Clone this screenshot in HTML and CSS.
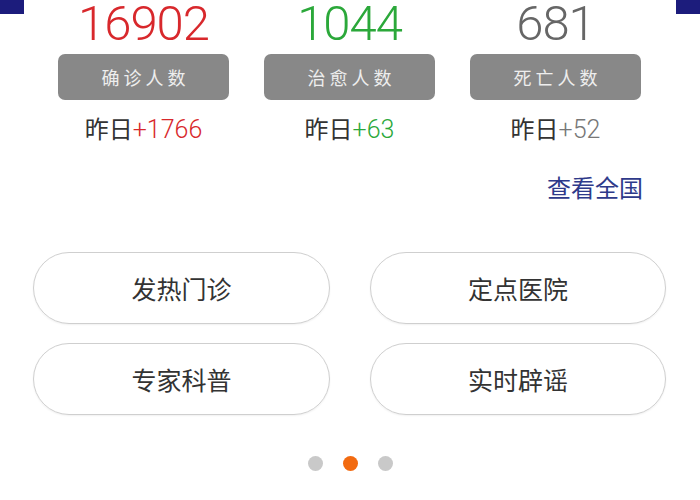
FILE: index.html
```html
<!DOCTYPE html>
<html lang="zh">
<head>
<meta charset="utf-8">
<title>疫情数据</title>
<link rel="stylesheet" href="styles.css">
</head>
<body>
<div class="page">
  <div class="corner corner-left"></div>
  <div class="corner corner-right"></div>

  <section class="stats">
    <div class="stat">
      <div class="num red">16902</div>
      <div class="label">确诊人数</div>
      <div class="delta">昨日<span class="inc red">+1766</span></div>
    </div>
    <div class="stat">
      <div class="num green">1044</div>
      <div class="label">治愈人数</div>
      <div class="delta">昨日<span class="inc green">+63</span></div>
    </div>
    <div class="stat">
      <div class="num gray">681</div>
      <div class="label">死亡人数</div>
      <div class="delta">昨日<span class="inc gray2">+52</span></div>
    </div>
  </section>

  <div class="more"><a class="more-link">查看全国</a></div>

  <section class="links">
    <div class="pill">发热门诊</div>
    <div class="pill">定点医院</div>
    <div class="pill">专家科普</div>
    <div class="pill">实时辟谣</div>
  </section>

  <div class="dots">
    <span class="dot"></span>
    <span class="dot active"></span>
    <span class="dot"></span>
  </div>
</div>
</body>
</html>
```

FILE: styles.css
```css
html, body {
  margin: 0;
  padding: 0;
  background: #fff;
}

body {
  font-family: "Liberation Sans", "Noto Sans CJK SC", sans-serif;
  color: #333;
}

.page {
  position: relative;
  width: 700px;
  height: 500px;
  overflow: hidden;
}

.corner {
  position: absolute;
  top: 0;
  width: 24px;
  height: 14px;
  background: #1c1c7c;
}

.corner-left { left: 0; }
.corner-right { right: 0; }

.stats {
  display: grid;
  grid-template-columns: repeat(3, 171px);
  column-gap: 35px;
  padding: 0 0 0 58px;
}

.stat {
  display: flex;
  flex-direction: column;
  align-items: center;
}

.num {
  font-family: Roboto, "Liberation Sans", sans-serif;
  font-weight: 300;
  font-size: 49px;
  line-height: 48px;
  height: 48px;
  letter-spacing: -1px;
}

.red { color: #d8282c; }
.green { color: #2ba83a; }
.gray { color: #666; }
.gray2 { color: #777; }

.label {
  margin-top: 6px;
  width: 171px;
  height: 46px;
  border-radius: 7px;
  background: #888;
  color: #eee;
  font-size: 18px;
  letter-spacing: 4px;
  text-indent: 4px;
  display: flex;
  align-items: center;
  justify-content: center;
}

.delta {
  margin-top: 15px;
  font-size: 24px;
  line-height: 30px;
  color: #333;
}

.inc {
  font-family: Roboto, "Liberation Sans", sans-serif;
  font-weight: 300;
  font-size: 25px;
}

.more {
  display: flex;
  justify-content: flex-end;
  padding: 0 57px;
  margin-top: 29px;
}

.more-link {
  font-size: 24px;
  line-height: 30px;
  color: #2e3a8a;
}

.links {
  display: grid;
  grid-template-columns: 297px 296px;
  column-gap: 40px;
  row-gap: 19px;
  padding: 0 0 0 33px;
  margin-top: 48px;
}

.pill {
  height: 70px;
  border: 1px solid #cfcfcf;
  border-radius: 36px;
  display: flex;
  align-items: center;
  justify-content: center;
  font-size: 25px;
  color: #333;
  box-shadow: 0 1px 2px rgba(0, 0, 0, 0.06);
}

.dots {
  display: flex;
  justify-content: center;
  gap: 20px;
  margin-top: 41px;
}

.dot {
  width: 15px;
  height: 15px;
  border-radius: 50%;
  background: #c9c9c9;
}

.dot.active {
  background: #f26a10;
}
```
